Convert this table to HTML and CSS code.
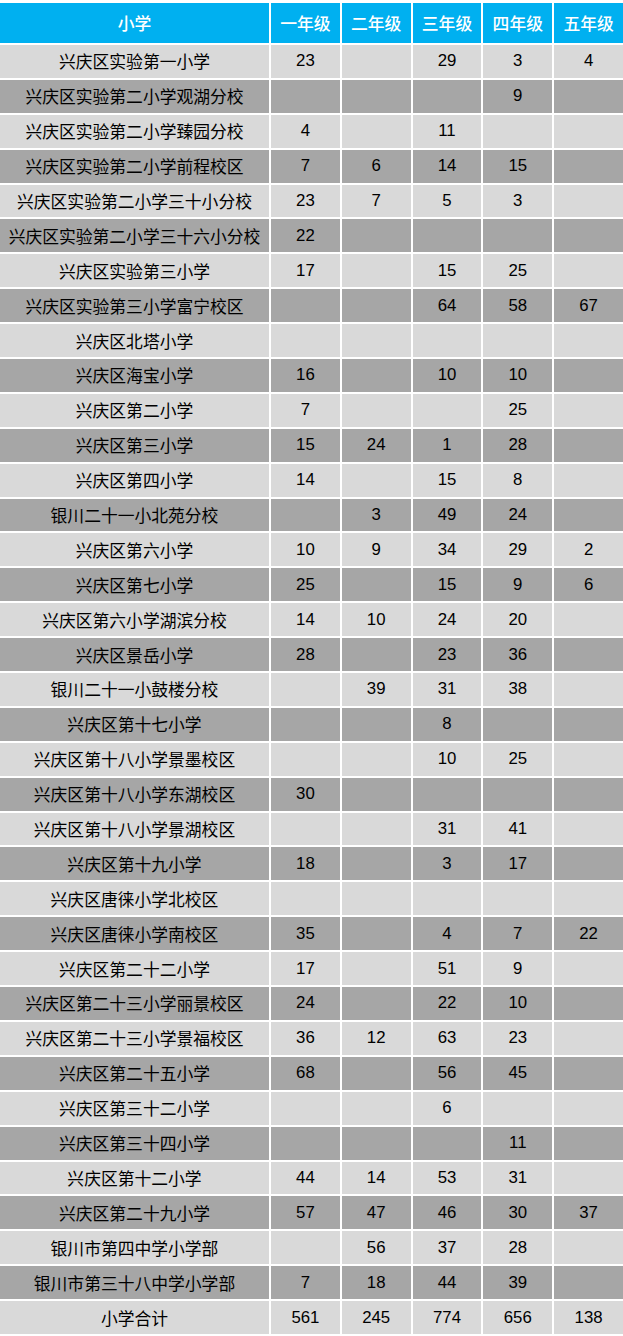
FILE: index.html
```html
<!DOCTYPE html>
<html lang="zh">
<head>
<meta charset="utf-8">
<link rel="stylesheet" href="styles.css">
</head>
<body>
<div class="sheet">
  <div class="row head"><div>小学</div><div>一年级</div><div>二年级</div><div>三年级</div><div>四年级</div><div>五年级</div></div>
  <div class="row"><div>兴庆区实验第一小学</div><div>23</div><div></div><div>29</div><div>3</div><div>4</div></div>
  <div class="row"><div>兴庆区实验第二小学观湖分校</div><div></div><div></div><div></div><div>9</div><div></div></div>
  <div class="row"><div>兴庆区实验第二小学臻园分校</div><div>4</div><div></div><div>11</div><div></div><div></div></div>
  <div class="row"><div>兴庆区实验第二小学前程校区</div><div>7</div><div>6</div><div>14</div><div>15</div><div></div></div>
  <div class="row"><div>兴庆区实验第二小学三十小分校</div><div>23</div><div>7</div><div>5</div><div>3</div><div></div></div>
  <div class="row"><div>兴庆区实验第二小学三十六小分校</div><div>22</div><div></div><div></div><div></div><div></div></div>
  <div class="row"><div>兴庆区实验第三小学</div><div>17</div><div></div><div>15</div><div>25</div><div></div></div>
  <div class="row"><div>兴庆区实验第三小学富宁校区</div><div></div><div></div><div>64</div><div>58</div><div>67</div></div>
  <div class="row"><div>兴庆区北塔小学</div><div></div><div></div><div></div><div></div><div></div></div>
  <div class="row"><div>兴庆区海宝小学</div><div>16</div><div></div><div>10</div><div>10</div><div></div></div>
  <div class="row"><div>兴庆区第二小学</div><div>7</div><div></div><div></div><div>25</div><div></div></div>
  <div class="row"><div>兴庆区第三小学</div><div>15</div><div>24</div><div>1</div><div>28</div><div></div></div>
  <div class="row"><div>兴庆区第四小学</div><div>14</div><div></div><div>15</div><div>8</div><div></div></div>
  <div class="row"><div>银川二十一小北苑分校</div><div></div><div>3</div><div>49</div><div>24</div><div></div></div>
  <div class="row"><div>兴庆区第六小学</div><div>10</div><div>9</div><div>34</div><div>29</div><div>2</div></div>
  <div class="row"><div>兴庆区第七小学</div><div>25</div><div></div><div>15</div><div>9</div><div>6</div></div>
  <div class="row"><div>兴庆区第六小学湖滨分校</div><div>14</div><div>10</div><div>24</div><div>20</div><div></div></div>
  <div class="row"><div>兴庆区景岳小学</div><div>28</div><div></div><div>23</div><div>36</div><div></div></div>
  <div class="row"><div>银川二十一小鼓楼分校</div><div></div><div>39</div><div>31</div><div>38</div><div></div></div>
  <div class="row"><div>兴庆区第十七小学</div><div></div><div></div><div>8</div><div></div><div></div></div>
  <div class="row"><div>兴庆区第十八小学景墨校区</div><div></div><div></div><div>10</div><div>25</div><div></div></div>
  <div class="row"><div>兴庆区第十八小学东湖校区</div><div>30</div><div></div><div></div><div></div><div></div></div>
  <div class="row"><div>兴庆区第十八小学景湖校区</div><div></div><div></div><div>31</div><div>41</div><div></div></div>
  <div class="row"><div>兴庆区第十九小学</div><div>18</div><div></div><div>3</div><div>17</div><div></div></div>
  <div class="row"><div>兴庆区唐徕小学北校区</div><div></div><div></div><div></div><div></div><div></div></div>
  <div class="row"><div>兴庆区唐徕小学南校区</div><div>35</div><div></div><div>4</div><div>7</div><div>22</div></div>
  <div class="row"><div>兴庆区第二十二小学</div><div>17</div><div></div><div>51</div><div>9</div><div></div></div>
  <div class="row"><div>兴庆区第二十三小学丽景校区</div><div>24</div><div></div><div>22</div><div>10</div><div></div></div>
  <div class="row"><div>兴庆区第二十三小学景福校区</div><div>36</div><div>12</div><div>63</div><div>23</div><div></div></div>
  <div class="row"><div>兴庆区第二十五小学</div><div>68</div><div></div><div>56</div><div>45</div><div></div></div>
  <div class="row"><div>兴庆区第三十二小学</div><div></div><div></div><div>6</div><div></div><div></div></div>
  <div class="row"><div>兴庆区第三十四小学</div><div></div><div></div><div></div><div>11</div><div></div></div>
  <div class="row"><div>兴庆区第十二小学</div><div>44</div><div>14</div><div>53</div><div>31</div><div></div></div>
  <div class="row"><div>兴庆区第二十九小学</div><div>57</div><div>47</div><div>46</div><div>30</div><div>37</div></div>
  <div class="row"><div>银川市第四中学小学部</div><div></div><div>56</div><div>37</div><div>28</div><div></div></div>
  <div class="row"><div>银川市第三十八中学小学部</div><div>7</div><div>18</div><div>44</div><div>39</div><div></div></div>
  <div class="row"><div>小学合计</div><div>561</div><div>245</div><div>774</div><div>656</div><div>138</div></div>
</div>
</body>
</html>
```

FILE: styles.css
```css
html, body {
  margin: 0;
  padding: 0;
  background: #ffffff;
}
body {
  font-family: "Liberation Sans", "Noto Sans CJK SC", sans-serif;
  font-size: 16.8px;
  color: #000000;
}
.sheet {
  display: flex;
  flex-direction: column;
  gap: 2px;
  padding-top: 3px;
  width: 623px;
}
.row {
  display: grid;
  grid-template-columns: 269px repeat(5, 1fr);
  column-gap: 2px;
  height: 32.9px;
}
.row > div {
  display: flex;
  align-items: center;
  justify-content: center;
  white-space: nowrap;
  background: #d9d9d9;
}
.row:nth-child(odd) > div {
  background: #a6a6a6;
}
.row.head {
  height: 40px;
}
.row.head > div {
  background: #00b0f0;
  color: #ffffff;
  font-weight: 500;
}
```
